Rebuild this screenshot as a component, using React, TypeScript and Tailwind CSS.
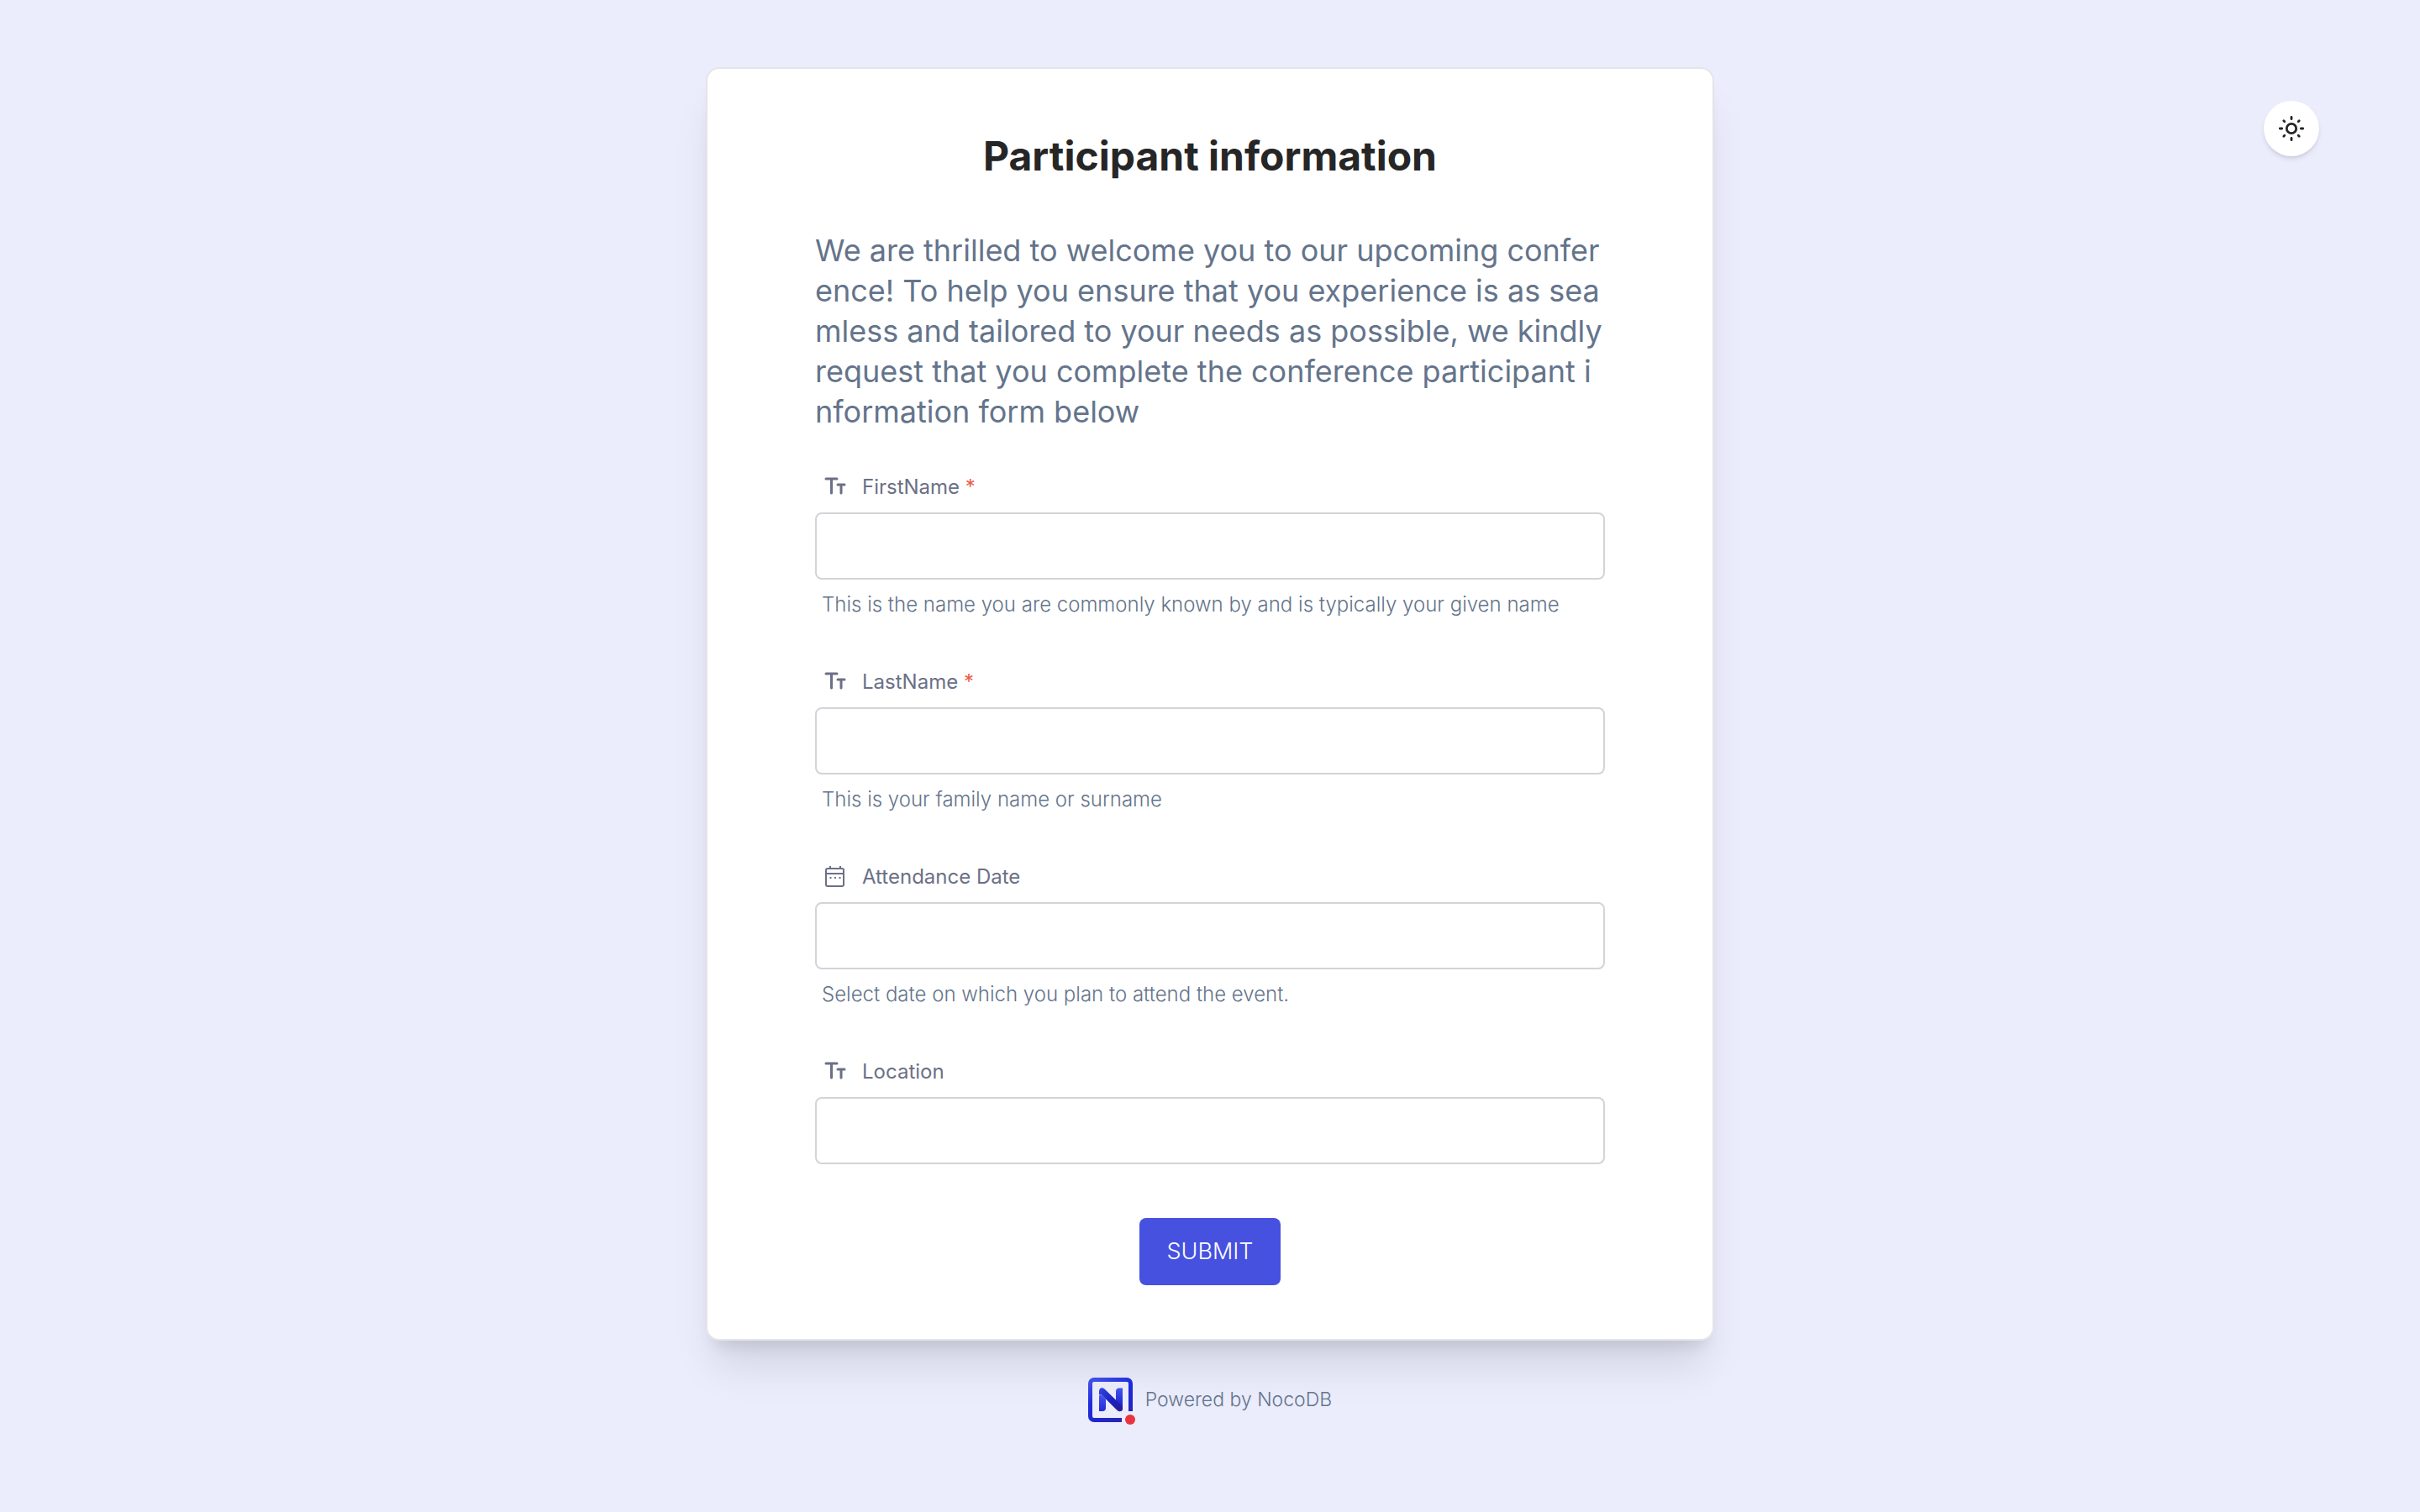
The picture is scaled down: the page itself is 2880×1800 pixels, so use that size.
import type { ReactNode } from 'react';

const descriptionLines = [
  'We are thrilled to welcome you to our upcoming confer',
  'ence! To help you ensure that you experience is as sea',
  'mless and tailored to your needs as possible, we kindly',
  'request that you complete the conference participant i',
  'nformation form below',
];

function TextIcon() {
  return (
    <svg className="size-8" viewBox="0 0 32 32" fill="none" stroke="currentColor" strokeLinecap="round" strokeWidth="3" aria-hidden="true">
      <path d="M5 6h13M11.500 6v17" />
      <path d="M19 13h8M23 13v10" />
    </svg>
  );
}

function CalendarIcon() {
  return (
    <svg className="size-8" viewBox="0 0 32 32" fill="none" stroke="currentColor" strokeWidth="2" aria-hidden="true">
      <rect x="5" y="6" width="21" height="21" rx="2" />
      <path d="M5 12h21M10 3v4M22 3v4" />
      <path d="M9.500 17h2M15 17h2M20.500 17h2" />
    </svg>
  );
}

function SunIcon() {
  return (
    <svg className="size-8" viewBox="0 0 32 32" fill="none" stroke="currentColor" strokeLinecap="round" strokeWidth="2.800" aria-hidden="true">
      <circle cx="16" cy="16" r="5.700" />
      <path d="M16 2.300v2.400M16 27.300v2.400M2.300 16h2.400M27.300 16h2.400M6.800 6.800l1 1M24.200 24.200l1 1M6.800 25.200l1-1M24.200 7.800l1-1" />
    </svg>
  );
}

function Logo() {
  return (
    <svg className="size-14" viewBox="0 0 56 56" fill="none" aria-hidden="true">
      <defs>
        <linearGradient id="frame" x1="14" y1="0" x2="44" y2="56" gradientUnits="userSpaceOnUse">
          <stop stopColor="#3f4de4" />
          <stop offset="0.35" stopColor="#1f2bdc" />
          <stop offset="0.65" stopColor="#1f27cf" />
          <stop offset="1" stopColor="#2f22a8" />
        </linearGradient>
        <linearGradient id="left" x1="16" y1="22" x2="16" y2="40" gradientUnits="userSpaceOnUse">
          <stop stopColor="#4351e8" />
          <stop offset="1" stopColor="#1f2bdc" />
        </linearGradient>
        <linearGradient id="diagonal" x1="14" y1="14" x2="40" y2="40" gradientUnits="userSpaceOnUse">
          <stop stopColor="#3341e2" />
          <stop offset="0.5" stopColor="#1a23c0" />
          <stop offset="1" stopColor="#2a1a90" />
        </linearGradient>
        <linearGradient id="right" x1="36" y1="14" x2="36" y2="40" gradientUnits="userSpaceOnUse">
          <stop stopColor="#4351e8" />
          <stop offset="0.6" stopColor="#1f2bdc" />
          <stop offset="1" stopColor="#2a1a90" />
        </linearGradient>
      </defs>
      <path d="M50.500 40V7a4.500 4.500 0 0 0-4.500-4.500H7A4.500 4.500 0 0 0 2.500 7v39A4.500 4.500 0 0 0 7 50.500h33" stroke="url(#frame)" strokeWidth="5" />
      <path d="M33 34V16.500a4 4 0 0 1 4-4h4V37a3 3 0 0 1-3 3z" fill="url(#right)" />
      <path d="M13 22v-5.500c0-4.500 4-5.500 7-2.500l21 20.500v2c0 4-4 5-7 2L16 20.500c-1.500-1-3-.5-3 1.500z" fill="url(#diagonal)" />
      <path d="M13 40V23c0-3 2-3.500 3.500-2l4.500 4.500V36a4 4 0 0 1-4 4z" fill="url(#left)" />
      <circle cx="50" cy="50" r="6" fill="#e8343f" />
    </svg>
  );
}

type FieldProps = { id: string; label: string; icon: ReactNode; required?: boolean; hint?: string };

function Field({ id, label, icon, required, hint }: FieldProps) {
  return (
    <div className="flex flex-col">
      <label htmlFor={id} className="flex h-8 items-center gap-4 pl-2 text-2xl text-[#6b7086]">
        {icon}
        <span>
          {label}
          {required && <span className="text-[#ee5a4a]"> *</span>}
        </span>
      </label>
      <input
        id={id}
        type="text"
        required={required}
        aria-describedby={hint ? `${id}-hint` : undefined}
        className="mt-[14px] h-20 w-full rounded-lg border-2 border-[#d3d3d9] bg-white px-4 text-2xl text-[#262626] outline-none focus:border-[#4651e0]"
      />
      {hint && (
        <p id={`${id}-hint`} className="mt-[14px] pl-2 text-2xl/8 font-light text-[#64748b]">
          {hint}
        </p>
      )}
    </div>
  );
}

export default function App() {
  return (
    <div className="relative flex min-h-screen flex-col items-center bg-[#ebecfc] pt-20 font-['Inter',sans-serif]">
      <button
        type="button"
        aria-label="Toggle theme"
        className="absolute top-[120px] right-[120px] flex size-[66px] items-center justify-center rounded-full bg-white text-[#262626] shadow-md"
      >
        <SunIcon />
      </button>
      <main className="w-full max-w-[1200px] rounded-2xl border-2 border-[#e5e5e8] bg-white px-32 pt-[74px] pb-16 shadow-[0_40px_50px_-10px_rgba(0,0,0,0.1),0_16px_20px_-12px_rgba(0,0,0,0.12)]">
        <h1 className="text-center text-5xl/[60px] font-bold text-[#262626]">Participant information</h1>
        <p className="mt-[58px] text-4xl/[48px] whitespace-nowrap text-[#64748b]">
          {descriptionLines.map((line) => (
            <span key={line} className="block">
              {line}
            </span>
          ))}
        </p>
        <form className="mt-[50px] flex flex-col" onSubmit={(event) => event.preventDefault()}>
          <div className="flex flex-col gap-[60px]">
            <Field id="first-name" label="FirstName" icon={<TextIcon />} required hint="This is the name you are commonly known by and is typically your given name" />
            <Field id="last-name" label="LastName" icon={<TextIcon />} required hint="This is your family name or surname" />
            <Field id="attendance-date" label="Attendance Date" icon={<CalendarIcon />} hint="Select date on which you plan to attend the event." />
            <Field id="location" label="Location" icon={<TextIcon />} />
          </div>
          <button type="submit" className="mt-16 h-20 self-center rounded-lg bg-[#4651e0] px-8 text-[27px] font-light text-white">
            SUBMIT
          </button>
        </form>
      </main>
      <footer className="mt-11">
        <a href="https://nocodb.com" className="flex items-center gap-3 text-[23px] font-light text-[#64748b]">
          <Logo />
          <span className="pb-1">Powered by NocoDB</span>
        </a>
      </footer>
    </div>
  );
}
